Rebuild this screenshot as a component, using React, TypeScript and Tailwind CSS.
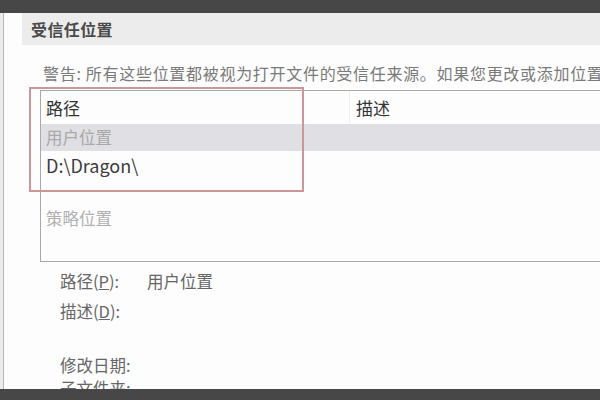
import React from "react";

const font = { fontFamily: '"Noto Sans CJK SC", "Noto Sans", sans-serif' };

export default function App() {
  return (
    <div
      className="w-[600px] h-[400px] overflow-hidden bg-white flex flex-col relative"
      style={font}
    >
      <div className="h-[13px] bg-[#474747] shrink-0" />

      <div className="h-[376px] shrink-0 flex overflow-hidden bg-[#fdfdfd]">
        <div className="w-[3px] bg-[#ececec] shrink-0" />
        <div className="w-[1px] bg-[#b5b5b5] shrink-0" />

        <div className="flex-1 flex flex-col min-w-0 [&>*]:shrink-0">
          {/* section title */}
          <div className="ml-[18px] h-[32px] bg-[#ececec] flex items-center pl-[9px]">
            <span className="text-[16px] leading-none text-[#4a4a4a] font-bold tracking-[0.4px]">
              受信任位置
            </span>
          </div>

          {/* warning */}
          <div className="mt-[18px] ml-[39px] h-[20px] flex items-center whitespace-nowrap text-[16px] text-[#7a7a7a] tracking-[0.7px]">
            警告: 所有这些位置都被视为打开文件的受信任来源。如果您更改或添加位置
          </div>

          {/* list */}
          <div className="mt-[7px] ml-[36px] h-[172px] border-t border-l border-b border-[#a9a9a9] flex flex-col">
            <div className="h-[33px] flex text-[17px] text-[#333]">
              <div className="w-[309px] pl-[5px] flex items-center border-r border-[#eeeeee]">路径</div>
              <div className="flex-1 pl-[6px] flex items-center">描述</div>
            </div>
            <div className="h-[27px] bg-[#e0dfe3] pl-[5px] flex items-center text-[16.5px] text-[#a9a9a9]">
              用户位置
            </div>
            <div className="h-[28px] pl-[5px] flex items-center text-[18px] text-[#3c3c3c]">
              D:\Dragon\
            </div>
            <div className="h-[26px]" />
            <div className="h-[26px] pl-[5px] flex items-center text-[16.5px] text-[#b0b0b0]">
              策略位置
            </div>
          </div>

          {/* details */}
          <div className="ml-[56px] mt-[9px] flex flex-col text-[16.5px] text-[#666]">
            <div className="h-[20px] flex items-center">
              <span className="w-[87px]">
                路径(<span className="underline">P</span>):
              </span>
              <span>用户位置</span>
            </div>
            <div className="h-[20px] mt-[10px] flex items-center">
              描述(<span className="underline">D</span>):
            </div>
            <div className="h-[20px] mt-[34px] flex items-center">修改日期:</div>
            <div className="h-[20px] mt-[3px] flex items-center">子文件夹:</div>
          </div>
        </div>
      </div>

      <div className="h-[11px] bg-[#474747] shrink-0" />

      {/* red annotation box */}
      <div className="absolute left-[29px] top-[87px] w-[275px] h-[105px] border-2 border-[#c99797] pointer-events-none" />
    </div>
  );
}
